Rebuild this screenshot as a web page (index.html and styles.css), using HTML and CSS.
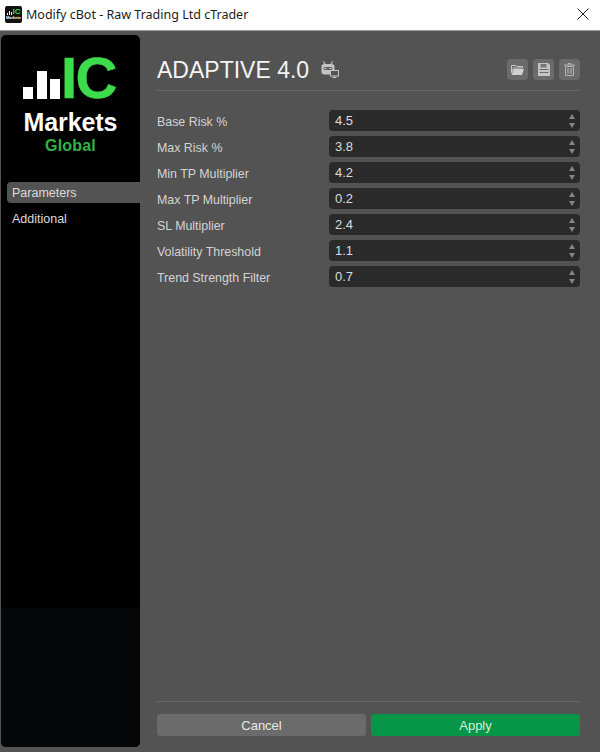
FILE: index.html
```html
<!DOCTYPE html>
<html lang="en">
<head>
    <meta charset="UTF-8">
    <meta name="viewport" content="width=device-width, initial-scale=1.0">
    <title>Modify cBot</title>
    <link rel="stylesheet" href="styles.css">
</head>
<body>

    <header class="titlebar">
        <div class="app-icon">
            <div class="app-icon-top">
                <span class="app-bars"><i class="b1"></i><i class="b2"></i><i class="b3"></i></span>
                <span class="app-ic">IC</span>
            </div>
            <span class="app-markets">Markets</span>
        </div>
        <span class="titlebar-text">Modify cBot - Raw Trading Ltd cTrader</span>
        <svg class="close-icon" width="12" height="12" viewBox="0 0 12 12">
            <path d="M0.5 0.5 L11.5 11.5 M11.5 0.5 L0.5 11.5" stroke="#222" stroke-width="1" fill="none"/>
        </svg>
    </header>

    <div class="window">
        <aside class="sidebar">
            <div class="logo">
                <div class="logo-top">
                    <div class="logo-bars">
                        <span class="bar bar-1"></span>
                        <span class="bar bar-2"></span>
                        <span class="bar bar-3"></span>
                    </div>
                    <span class="logo-ic">IC</span>
                </div>
                <div class="logo-markets">Markets</div>
                <div class="logo-global">Global</div>
            </div>
            <nav class="menu">
                <div class="menu-item active">Parameters</div>
                <div class="menu-item">Additional</div>
            </nav>
            <div class="sidebar-bottom"></div>
        </aside>

        <main class="content">
            <div class="head">
                <h1>ADAPTIVE 4.0</h1>
                <svg class="bot-icon" width="18" height="17" viewBox="0 0 18 17">
                    <path d="M2.5 0.5 L4 3.5 M11.5 0.5 L10 3.5" stroke="#c4c4c4" stroke-width="1.2" fill="none"/>
                    <rect x="0.5" y="3" width="13" height="10.5" rx="3" fill="#c4c4c4"/>
                    <rect x="2.5" y="6" width="9" height="3" rx="1.5" fill="#5c5c5c"/>
                    <rect x="3.5" y="7" width="2" height="1" fill="#d8d8d8"/>
                    <rect x="8.5" y="7" width="2" height="1" fill="#d8d8d8"/>
                    <rect x="9.5" y="9.5" width="8" height="5.5" fill="#535353" stroke="#c4c4c4" stroke-width="1"/>
                    <path d="M13.5 15 V16.5 M11.5 16.5 H15.5" stroke="#c4c4c4" stroke-width="1"/>
                </svg>
                <div class="tools">
                    <button class="tool">
                        <svg width="13" height="10" viewBox="0 0 13 10">
                            <path d="M0.5 0.5 H5 L6 1.5 H11.5 V3 H2.5 L0.5 8 Z" fill="none" stroke="#c8c8c8"/>
                            <path d="M3 4 H13 L11 10 H0.5 Z" fill="#d0d0d0"/>
                        </svg>
                    </button>
                    <button class="tool">
                        <svg width="12" height="13" viewBox="0 0 12 13">
                            <path d="M0 0 H10 L12 2 V13 H0 Z" fill="#c4c4c4"/>
                            <rect x="2.5" y="1" width="6" height="3.5" fill="#777"/>
                            <rect x="1.5" y="6" width="9" height="1" fill="#6b6b6b"/>
                            <rect x="1.5" y="9" width="9" height="1" fill="#6b6b6b"/>
                        </svg>
                    </button>
                    <button class="tool">
                        <svg width="11" height="13" viewBox="0 0 11 13">
                            <path d="M0 2 H11 M4 2 V0.5 H7 V2" stroke="#b5b5b5" stroke-width="1" fill="none"/>
                            <path d="M1.5 3.5 H9.5 V12.5 H1.5 Z" fill="none" stroke="#b5b5b5"/>
                            <path d="M4 5 V11 M7 5 V11" stroke="#b5b5b5" stroke-width="1.2"/>
                        </svg>
                    </button>
                </div>
            </div>

            <div class="params">
                <div class="param">
                    <label>Base Risk %</label>
                    <div class="field">4.5<span class="spin"><i class="up"></i><i class="down"></i></span></div>
                </div>
                <div class="param">
                    <label>Max Risk %</label>
                    <div class="field">3.8<span class="spin"><i class="up"></i><i class="down"></i></span></div>
                </div>
                <div class="param">
                    <label>Min TP Multiplier</label>
                    <div class="field">4.2<span class="spin"><i class="up"></i><i class="down"></i></span></div>
                </div>
                <div class="param">
                    <label>Max TP Multiplier</label>
                    <div class="field">0.2<span class="spin"><i class="up"></i><i class="down"></i></span></div>
                </div>
                <div class="param">
                    <label>SL Multiplier</label>
                    <div class="field">2.4<span class="spin"><i class="up"></i><i class="down"></i></span></div>
                </div>
                <div class="param">
                    <label>Volatility Threshold</label>
                    <div class="field">1.1<span class="spin"><i class="up"></i><i class="down"></i></span></div>
                </div>
                <div class="param">
                    <label>Trend Strength Filter</label>
                    <div class="field">0.7<span class="spin"><i class="up"></i><i class="down"></i></span></div>
                </div>
            </div>

            <div class="footer">
                <button class="btn btn-cancel">Cancel</button>
                <button class="btn btn-apply">Apply</button>
            </div>
        </main>
    </div>

</body>
</html>
```

FILE: styles.css
```css
* {
    margin: 0;
    padding: 0;
    box-sizing: border-box;
}

html, body {
    height: 100%;
    overflow: hidden;
}

body {
    font-family: "Liberation Sans", Arial, sans-serif;
    background: #535353;
    color: #d8d8d8;
    display: flex;
    flex-direction: column;
}

.titlebar {
    height: 31px;
    background: #fff;
    border-bottom: 1px solid #9a9a9a;
    display: flex;
    align-items: center;
    padding-left: 5px;
    padding-bottom: 2px;
    flex-shrink: 0;
}

.app-icon {
    width: 17px;
    height: 17px;
    background: #111;
    border-radius: 2px;
    display: flex;
    flex-direction: column;
    align-items: center;
    justify-content: center;
    margin-right: 4px;
    overflow: hidden;
}

.app-icon-top {
    display: flex;
    align-items: flex-end;
    gap: 1px;
    height: 7px;
}

.app-bars {
    display: flex;
    align-items: flex-end;
    gap: 1px;
}

.app-bars i {
    display: block;
    width: 1px;
    background: #fff;
}

.app-bars .b1 { height: 2px; }
.app-bars .b2 { height: 4px; }
.app-bars .b3 { height: 3px; }

.app-ic {
    font-size: 8px;
    line-height: 7px;
    font-weight: bold;
    color: #3ddc4c;
}

.app-markets {
    font-size: 4px;
    line-height: 5px;
    font-weight: bold;
    color: #fff;
}

.titlebar-text {
    font-family: "Noto Sans", "Open Sans", sans-serif;
    font-size: 12.5px;
    color: #1c1c1c;
}

.close-icon {
    margin-left: auto;
    margin-right: 11px;
}

.window {
    flex: 1;
    display: flex;
    min-height: 0;
    padding: 4px 20px 5px 1px;
}

.sidebar {
    width: 139px;
    background: #000;
    border-radius: 5px;
    display: flex;
    flex-direction: column;
    overflow: hidden;
    flex-shrink: 0;
}

.logo {
    height: 147px;
    padding-top: 20px;
    display: flex;
    flex-direction: column;
    align-items: center;
}

.logo-top {
    display: flex;
    align-items: flex-end;
    gap: 1px;
    height: 46px;
    align-self: flex-start;
    padding-left: 22px;
}

.logo-bars {
    display: flex;
    align-items: flex-end;
    gap: 3.5px;
    height: 42px;
    margin-bottom: 2px;
}

.bar {
    display: block;
    width: 10px;
    background: #fff;
}

.bar-1 { height: 12px; }
.bar-2 { height: 28px; }
.bar-3 { height: 20px; }

.logo-ic {
    font-size: 58px;
    line-height: 46px;
    font-weight: bold;
    letter-spacing: -1.5px;
    color: #3ddc4c;
    -webkit-text-stroke: 0.5px #3ddc4c;
}

.logo-markets {
    font-size: 25px;
    line-height: 28px;
    font-weight: bold;
    letter-spacing: -0.1px;
    color: #fff;
    margin-top: 7px;
}

.logo-global {
    font-size: 16px;
    line-height: 18px;
    font-weight: bold;
    letter-spacing: 0.2px;
    color: #2fb344;
    margin-top: 1px;
}

.menu {
    flex: 1;
    padding-left: 6px;
    display: flex;
    flex-direction: column;
    gap: 5px;
}

.menu-item {
    height: 21px;
    line-height: 22px;
    padding-left: 5px;
    font-size: 12.5px;
    color: #dcdcdc;
}

.menu-item.active {
    background: #535353;
    border-radius: 4px 0 0 4px;
}

.sidebar-bottom {
    height: 139px;
    background: #050607;
}

.content {
    flex: 1;
    padding-left: 17px;
    display: flex;
    flex-direction: column;
}

.head {
    height: 56px;
    padding-top: 19px;
    border-bottom: 1px solid #686868;
    display: flex;
    align-items: flex-start;
}

.head h1 {
    font-size: 23px;
    line-height: 32px;
    font-weight: normal;
    color: #f4f4f4;
}

.bot-icon {
    margin: 7px 0 0 12px;
}

.tools {
    margin-left: auto;
    display: flex;
    gap: 5px;
    padding-top: 5px;
}

.tool {
    width: 21px;
    height: 21px;
    background: #6b6b6b;
    border: none;
    border-radius: 4px;
    display: flex;
    align-items: center;
    justify-content: center;
}

.params {
    flex: 1;
    padding-top: 19px;
    display: flex;
    flex-direction: column;
    gap: 5px;
}

.param {
    display: flex;
    align-items: center;
    height: 21px;
}

.param label {
    width: 172px;
    padding-top: 2px;
    font-size: 12.4px;
    color: #d4d4d4;
}

.field {
    flex: 1;
    height: 21px;
    line-height: 20px;
    background: #2a2a2a;
    border-radius: 4px;
    padding-left: 6px;
    font-size: 13px;
    color: #dcdcdc;
    display: flex;
    align-items: center;
    justify-content: space-between;
}

.spin {
    display: flex;
    flex-direction: column;
    gap: 4px;
    margin-right: 5px;
}

.spin i {
    display: block;
    width: 0;
    height: 0;
    border-left: 3px solid transparent;
    border-right: 3px solid transparent;
}

.spin .up {
    border-bottom: 5px solid #858585;
}

.spin .down {
    border-top: 5px solid #858585;
}

.footer {
    height: 46px;
    border-top: 1px solid #686868;
    padding-top: 12px;
    display: flex;
    gap: 5px;
}

.btn {
    flex: 1;
    height: 22px;
    border: none;
    border-radius: 3px;
    font-family: inherit;
    font-size: 13px;
    color: #e8e8e8;
}

.btn-cancel {
    background: #6b6b6b;
}

.btn-apply {
    background: #079647;
    color: #d5f0dd;
}
```
